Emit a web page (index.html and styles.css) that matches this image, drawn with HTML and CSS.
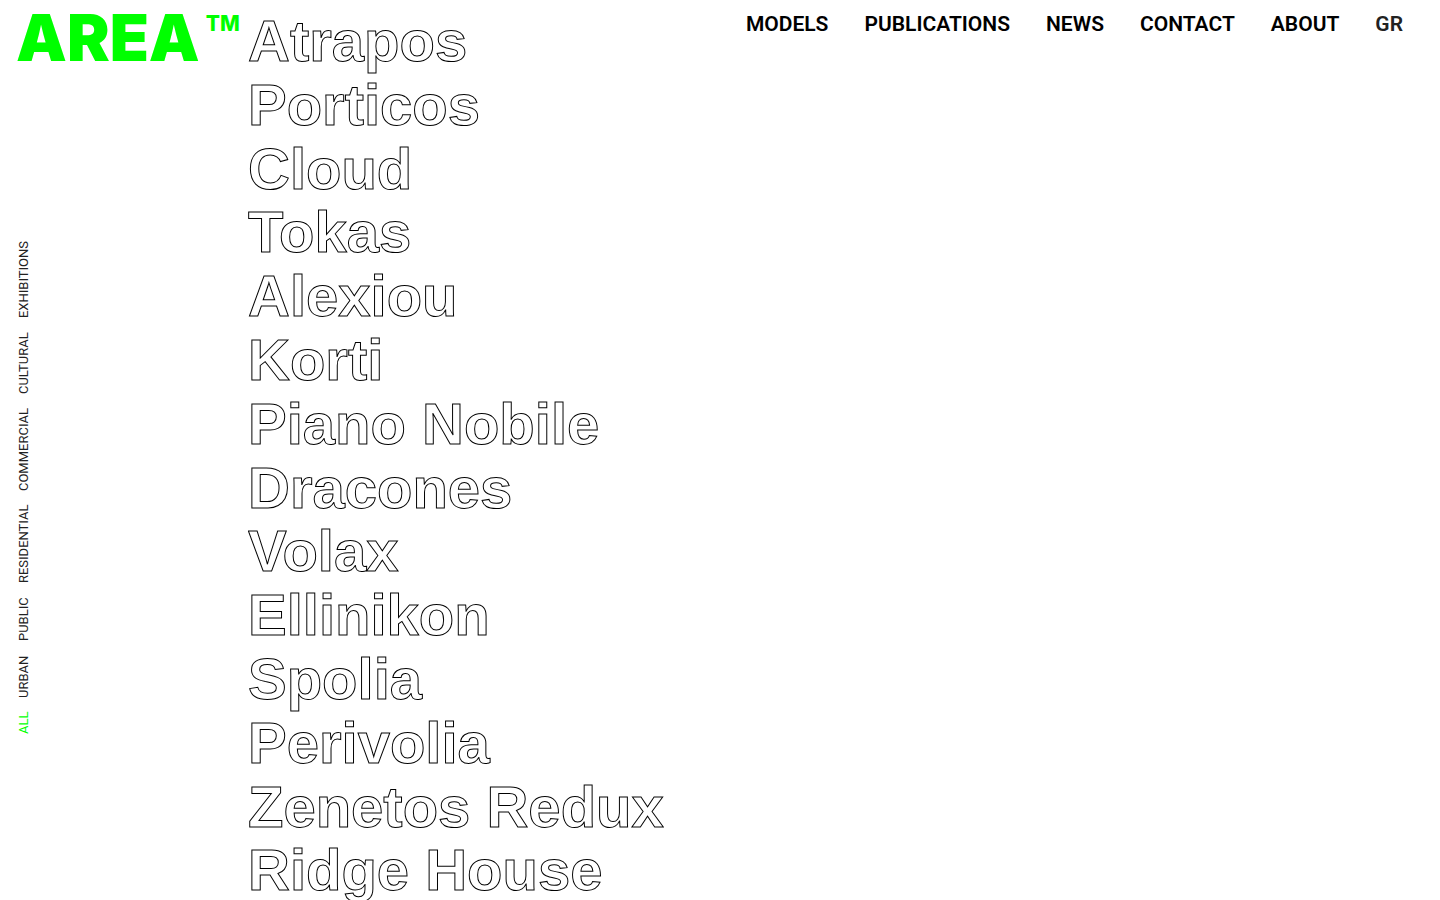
FILE: index.html
```html
<!DOCTYPE html>
<html lang="en">
<head>
<meta charset="utf-8">
<meta name="viewport" content="width=device-width, initial-scale=1">
<title>AREA</title>
<link rel="stylesheet" href="styles.css">
</head>
<body>
<div class="page">
  <aside class="side">
    <a class="logo" href="#"><span class="logo-name">AREA</span><span class="logo-tm">TM</span></a>
    <div class="filter-area">
      <nav class="filters" aria-label="Categories">
        <a class="active" href="#all">ALL</a>
        <a href="#urban">URBAN</a>
        <a href="#public">PUBLIC</a>
        <a href="#residential">RESIDENTIAL</a>
        <a href="#commercial">COMMERCIAL</a>
        <a href="#cultural">CULTURAL</a>
        <a href="#exhibitions">EXHIBITIONS</a>
      </nav>
    </div>
  </aside>
  <main class="projects">
    <a href="#">Atrapos</a>
    <a href="#">Porticos</a>
    <a href="#">Cloud</a>
    <a href="#">Tokas</a>
    <a href="#">Alexiou</a>
    <a href="#">Korti</a>
    <a href="#">Piano Nobile</a>
    <a href="#">Dracones</a>
    <a href="#">Volax</a>
    <a href="#">Ellinikon</a>
    <a href="#">Spolia</a>
    <a href="#">Perivolia</a>
    <a href="#">Zenetos Redux</a>
    <a href="#">Ridge House</a>
  </main>
  <nav class="menu" aria-label="Main">
    <a href="#">MODELS</a>
    <a href="#">PUBLICATIONS</a>
    <a href="#">NEWS</a>
    <a href="#">CONTACT</a>
    <a href="#">ABOUT</a>
    <a class="lang" href="#">GR</a>
  </nav>
</div>
</body>
</html>
```

FILE: styles.css
```css
* {
  box-sizing: border-box;
}

body {
  margin: 0;
  background: #fff;
  color: #000;
  font-family: Roboto, "Liberation Sans", sans-serif;
}

a {
  color: inherit;
  text-decoration: none;
  white-space: nowrap;
}

.page {
  display: grid;
  grid-template-columns: 248px auto 1fr;
  height: 100vh;
  overflow: hidden;
}

.side {
  display: flex;
  flex-direction: column;
  height: 100vh;
  padding-left: 16px;
}

.logo {
  display: flex;
  align-items: flex-start;
  gap: 6px;
  height: 76px;
  color: #0f0;
}

.logo-name {
  font-family: Inter, sans-serif;
  font-size: 64px;
  font-weight: 900;
  line-height: 76px;
}

.logo-tm {
  padding-top: 12px;
  font-family: Inter, sans-serif;
  font-size: 21px;
  font-weight: 800;
  line-height: 24px;
}

.filter-area {
  display: flex;
  flex: 1;
  align-items: center;
}

.filters {
  display: flex;
  gap: 14px;
  writing-mode: vertical-rl;
  transform: rotate(180deg);
  color: #222;
  font-size: 13px;
  line-height: 16px;
}

.filters .active {
  color: #0f0;
}

.projects {
  display: flex;
  flex-direction: column;
  height: 100vh;
  padding-top: 9px;
  overflow-y: auto;
  scrollbar-width: none;
  color: #fff;
  font-family: "Liberation Sans", Arial, sans-serif;
  font-size: 58px;
  font-weight: 700;
  line-height: 1.1;
  -webkit-text-stroke: 1px #000;
}

.menu {
  display: flex;
  justify-content: flex-end;
  gap: 36px;
  padding: 12px 37px 0 0;
  font-size: 21px;
  font-weight: 600;
  line-height: 24px;
}

.lang {
  color: #222;
}
```
